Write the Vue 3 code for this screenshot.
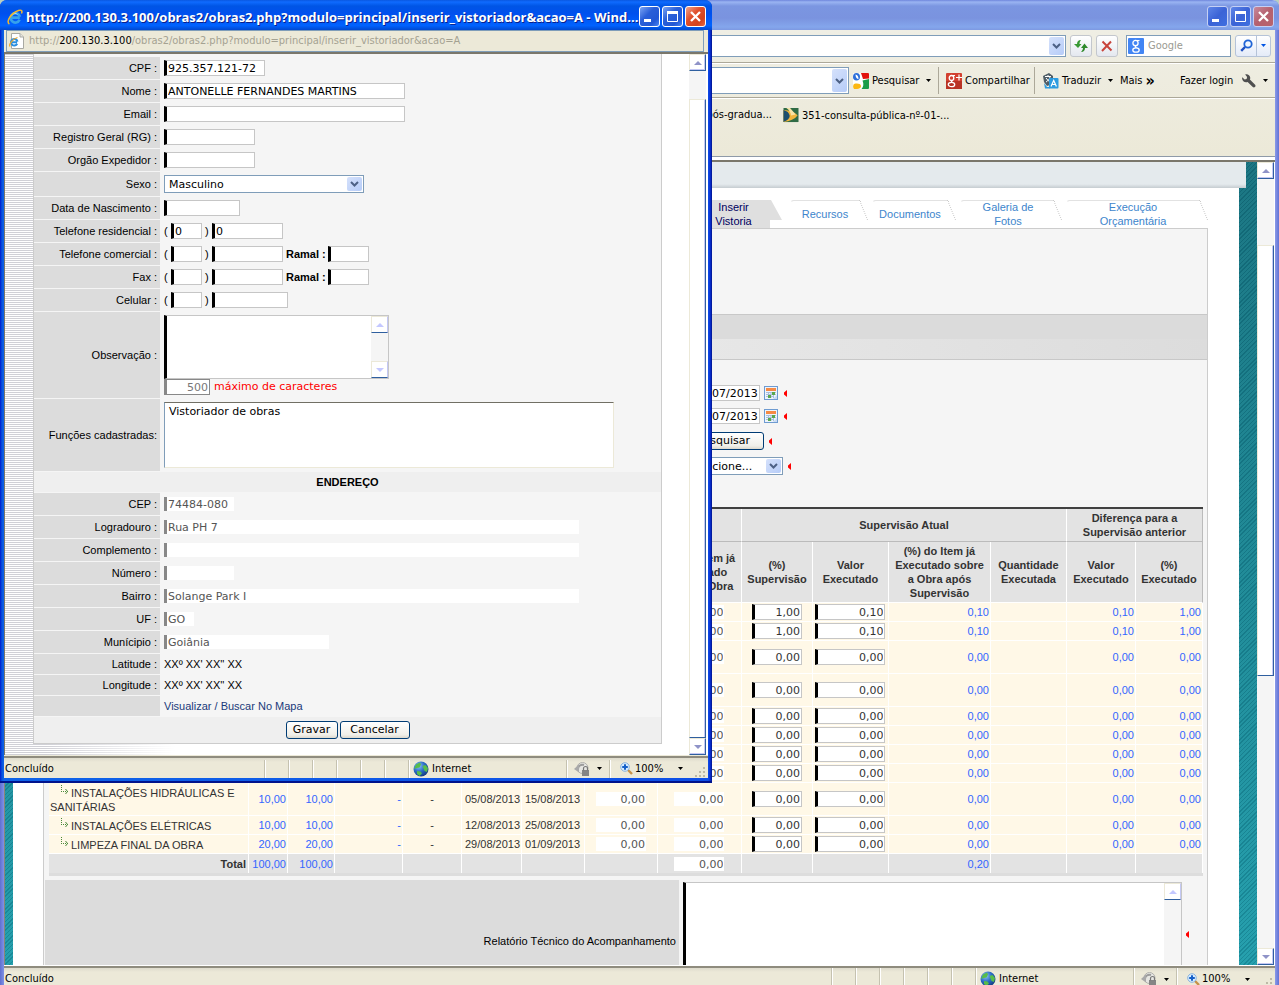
<script setup>
const paneCells = [1, 2, 3, 4, 5, 6]

const personal = [
  { id: 'cpf', label: 'CPF :', value: '925.357.121-72', size: 'w101' },
  { id: 'nome', label: 'Nome :', value: 'ANTONELLE FERNANDES MARTINS', size: 'w241' },
  { id: 'email', label: 'Email :', value: '', size: 'w241' },
  { id: 'rg', label: 'Registro Geral (RG) :', value: '', size: 'w91' },
  { id: 'orgao', label: 'Orgão Expedidor :', value: '', size: 'w91' },
]

const phones = [
  { id: 'telres', label: 'Telefone residencial :', ddd: '0', value: '0', size: 'w71', ramal: false },
  { id: 'telcom', label: 'Telefone comercial :', ddd: '', value: '', size: 'w71', ramal: true },
  { id: 'fax', label: 'Fax :', ddd: '', value: '', size: 'w71', ramal: true },
  { id: 'cel', label: 'Celular :', ddd: '', value: '', size: 'w76', ramal: false },
]

const address = [
  { id: 'cep', label: 'CEP :', value: '74484-080', size: 'w70' },
  { id: 'logradouro', label: 'Logradouro :', value: 'Rua PH 7', size: 'w415' },
  { id: 'complemento', label: 'Complemento :', value: '', size: 'w415' },
  { id: 'numero', label: 'Número :', value: '', size: 'w70' },
  { id: 'bairro', label: 'Bairro :', value: 'Solange Park I', size: 'w415' },
  { id: 'uf', label: 'UF :', value: 'GO', size: 'w30' },
  { id: 'municipio', label: 'Munícipio :', value: 'Goiânia', size: 'w165' },
]

const tabs = [
  { label: 'Recursos', size: 't82' },
  { label: 'Documentos', size: 't88' },
  { label: 'Galeria de Fotos', size: 't106' },
  { label: 'Execução Orçamentária', size: 't146' },
]

const cols = [200, 39, 47, 68, 59, 60, 63, 73, 84, 71, 76, 102, 76, 69, 67]
const total = cols.reduce((a, b) => a + b, 0)

const blank = { name: '', w: '', a: '', s: '', e: '' }
const items = [
  { ...blank, sup: '1,00', val: '0,10', diff: '1,00' },
  { ...blank, sup: '1,00', val: '0,10', diff: '1,00' },
  { ...blank, sup: '0,00', val: '0,00', diff: '0,00', tall: true },
  { ...blank, sup: '0,00', val: '0,00', diff: '0,00', tall: true },
  { ...blank, sup: '0,00', val: '0,00', diff: '0,00' },
  { ...blank, sup: '0,00', val: '0,00', diff: '0,00' },
  { ...blank, sup: '0,00', val: '0,00', diff: '0,00' },
  { ...blank, sup: '0,00', val: '0,00', diff: '0,00' },
  { name: 'INSTALAÇÕES HIDRÁULICAS E SANITÁRIAS', w: '10,00', a: '-', s: '05/08/2013', e: '15/08/2013', sup: '0,00', val: '0,00', diff: '0,00', tall: true },
  { name: 'INSTALAÇÕES ELÉTRICAS', w: '10,00', a: '-', s: '12/08/2013', e: '25/08/2013', sup: '0,00', val: '0,00', diff: '0,00' },
  { name: 'LIMPEZA FINAL DA OBRA', w: '20,00', a: '-', s: '29/08/2013', e: '01/09/2013', sup: '0,00', val: '0,00', diff: '0,00' },
]
</script>

<template>
  <svg class="defs" width="0" height="0" aria-hidden="true">
    <defs>
      <radialGradient id="globeFill" cx="35%" cy="30%" r="75%">
        <stop offset="0" stop-color="#8fc4f5" />
        <stop offset="0.5" stop-color="#2d6fc9" />
        <stop offset="1" stop-color="#123a80" />
      </radialGradient>
    </defs>
    <symbol id="i-ie" viewBox="0 0 16 16">
      <path d="M4 8.600h8.800M12.600 10.800A4.700 4.700 0 1 1 12.900 7.800" fill="none" stroke="#35a2ec" stroke-width="2.700" />
      <path d="M5.500 5.800a3.400 3.400 0 0 1 5-.4" fill="none" stroke="#a8defc" stroke-width="1" />
      <path d="M2.400 15C-1.500 13 4 4 11.500 1.500c3.500-1.200 4 .8 2.900 3" fill="none" stroke="#f2b92c" stroke-width="1.500" />
    </symbol>
    <symbol id="i-page" viewBox="0 0 16 16">
      <path d="M2.500.5h8.500l3.500 3.500v11.500h-12z" fill="#fff" stroke="#a9a9a2" />
      <path d="M11 .5V4h3.500" fill="#e6e6e0" stroke="#a9a9a2" />
      <path d="M2.500 9.300h5.600M8.200 10.800A3.300 3.300 0 1 1 8.500 8.600" fill="none" stroke="#2b8fe0" stroke-width="2" />
      <path d="M1 13.500c-1.500-2 3-8 7.500-9" fill="none" stroke="#f0a82a" stroke-width="1.200" />
    </symbol>
    <symbol id="i-min" viewBox="0 0 21 21"><path d="M5 13h7v3H5z" fill="#fff" /></symbol>
    <symbol id="i-max" viewBox="0 0 21 21">
      <path d="M5.500 6v9.500h10V6" fill="none" stroke="#fff" /><path d="M5 5h11v3H5z" fill="#fff" />
    </symbol>
    <symbol id="i-close" viewBox="0 0 21 21"><path d="M6 6l9 9M15 6l-9 9" stroke="#fff" stroke-width="2.300" /></symbol>
    <symbol id="i-chev" viewBox="0 0 9 6"><path d="M1 1l3.500 3.500L8 1" fill="none" stroke="#4d6185" stroke-width="2" /></symbol>
    <symbol id="i-down" viewBox="0 0 5 3"><path d="M0 0h5L2.500 3z" fill="currentColor" /></symbol>
    <symbol id="i-up" viewBox="0 0 8 4"><path d="M4 0l4 4H0z" fill="currentColor" /></symbol>
    <symbol id="i-dn" viewBox="0 0 8 4"><path d="M0 0h8L4 4z" fill="currentColor" /></symbol>
    <symbol id="i-refresh" viewBox="0 0 16 16">
      <path d="M8 2C5 2 4 4 4 6H1l4 4 3.500-4H6.500c0-1.500.5-2.500 1.500-4z" fill="#3a9a35" />
      <path d="M8 14c3 0 4-2 4-4h3l-3.500-4.500L8 10h2c0 1.500-.7 2.500-2 4z" fill="#2f8a2c" />
    </symbol>
    <symbol id="i-stop" viewBox="0 0 12 12">
      <path d="M1.500 1.500l9 9M10 1.500l-9 9.500" fill="none" stroke="#c8443c" stroke-width="2" />
    </symbol>
    <symbol id="i-g" viewBox="0 0 16 16">
      <rect width="16" height="16" rx="1" fill="#4285f4" />
      <ellipse cx="7.500" cy="5" rx="2.600" ry="2.700" fill="none" stroke="#fff" stroke-width="1.300" />
      <path d="M9 2.500h2.500M8 7.800c-1 .7-.8 1.400.5 2" fill="none" stroke="#fff" stroke-width="1.200" />
      <ellipse cx="8" cy="12" rx="3.200" ry="2.200" fill="none" stroke="#fff" stroke-width="1.300" />
    </symbol>
    <symbol id="i-search" viewBox="0 0 13 13">
      <circle cx="8" cy="5" r="3.700" fill="#eef5ff" stroke="#1e63d6" stroke-width="1.800" />
      <path d="M5 8l-3.800 3.800" stroke="#1e4fc0" stroke-width="2.400" />
    </symbol>
    <symbol id="i-google" viewBox="0 0 16 16">
      <rect width="16" height="16" rx="1" fill="#fff" />
      <path d="M8 0h7a1 1 0 0 1 1 1v4.500l-6 .5z" fill="#e2120c" />
      <path d="M9.500 7.500L16 6v9a1 1 0 0 1-1 1H8.500c2-2 2.500-5 1-8.500z" fill="#1a9c47" />
      <ellipse cx="3.500" cy="3.800" rx="3.500" ry="3.800" fill="#2d6fd9" />
      <path d="M2.500 1.500c2 .2 3 2 3 4.500-1.800 0-3-2-3-4.500z" fill="#fff" />
      <path d="M1 11c3-1 6.500-.5 7 1.800.3 1.800-1.500 3.200-4 3.200H1.200C-.2 15-.2 12 1 11z" fill="#fbb713" />
    </symbol>
    <symbol id="i-gplus" viewBox="0 0 16 16">
      <rect width="16" height="16" rx="1" fill="#d23f2f" />
      <path d="M0 8h16v8H0z" fill="#b93325" />
      <ellipse cx="5.500" cy="5" rx="2.300" ry="2.500" fill="none" stroke="#fff" stroke-width="1.300" />
      <path d="M6.500 2.500H9M6 7.500c-1 .8-.5 1.300.3 2M13 1.500v6M10 4.500h6" fill="none" stroke="#fff" stroke-width="1.200" />
      <ellipse cx="5.500" cy="11.500" rx="3.200" ry="2.200" fill="none" stroke="#fff" stroke-width="1.300" />
    </symbol>
    <symbol id="i-trans" viewBox="0 0 16 16">
      <path d="M0 3l6-3 4 3v8l-6 2-3-4z" fill="#4f5d66" />
      <path d="M2 3.500h6M5 2v2M3 9c2-1 3.500-3 4-5M3 5l3 3.500" stroke="#fff" fill="none" />
      <path d="M1 10l3 4h3v1.500H2z" fill="#2b9be0" />
      <rect x="6" y="5" width="9.500" height="10.500" rx="1" fill="#2b9be0" />
      <path d="M8 13.500l2.700-6 2.700 6M9 11.500h3.500" fill="none" stroke="#fff" stroke-width="1.200" />
    </symbol>
    <symbol id="i-wrench" viewBox="0 0 14 14">
      <path d="M3.200.4C5.500-.3 8 1 8.200 3.500c.1.800 0 1.500-.3 2.100l5.200 5.200c1.300 1.500-.8 3.600-2.300 2.300L5.600 7.900C3 8.900.3 7.200.1 4.500c0-.5 0-.9.200-1.300l2.300 2.200 2-.5.500-2z" fill="#4f4f4f" />
    </symbol>
    <symbol id="i-fav" viewBox="0 0 16 16">
      <path d="M0 0h16v15H0z" fill="#2f6b45" /><path d="M0 2c7 0 13 3 15 6-3 4-8 6-15 7z" fill="#f0b53c" />
      <path d="M0 2c4 1 6 3 6.500 6S4 13 0 15z" fill="#1d4f6e" /><path d="M3 0h4l6 7-5 1C8 5 6 2 3 0z" fill="#f7e3a5" />
    </symbol>
    <symbol id="i-globe" viewBox="0 0 16 16">
      <circle cx="8" cy="8" r="7.500" fill="url(#globeFill)" />
      <path d="M3 3.500l4-2 1 2-1.500 3-3 .5L1 8zM9.500 5l3-1 2.500 3-1 4-2.500-1-1-2.500zM4 10l3.500.5 1.500 2-2.500 2.500L4 13z" fill="#57bd4a" />
    </symbol>
    <symbol id="i-lock" viewBox="0 0 16 14">
      <circle cx="8.500" cy="6" r="5.500" fill="#e6e6e2" stroke="#b0b0ac" />
      <path d="M4 7c0-3 3-5 6-4" fill="none" stroke="#9c9c9c" stroke-width="2" />
      <path d="M0 7l5-4.500v8z" fill="#a9a9a9" />
      <path d="M8 14V8h7v6z" fill="#858585" /><path d="M9.500 8.500V6.500a2 2 0 0 1 4 0v2" fill="none" stroke="#777" stroke-width="1.200" />
    </symbol>
    <symbol id="i-zoom" viewBox="0 0 13 13">
      <path d="M8 8l4 4" stroke="#c79249" stroke-width="2.400" />
      <circle cx="5" cy="5" r="4.300" fill="#d7ecff" stroke="#8cb4dc" />
      <path d="M5 2.200v5.600M2.200 5h5.600" stroke="#1560c8" stroke-width="2" />
    </symbol>
    <symbol id="i-grip" viewBox="0 0 11 11">
      <path d="M8 0h2v2H8zM4 4h2v2H4zM8 4h2v2H8zM0 8h2v2H0zM4 8h2v2H4zM8 8h2v2H8z" fill="#bdb9a6" />
    </symbol>
    <symbol id="i-cal" viewBox="0 0 14 14">
      <rect x=".5" y=".5" width="13" height="13" fill="#eef4fc" stroke="#6e9bd1" />
      <path d="M2 2h10v3H2z" fill="#f58a45" />
      <path d="M2 6.500h10M2 8.500h10M2 10.500h8M4.500 6v6M7 6v6M9.500 6v6" stroke="#a9bfdc" />
      <path d="M8 6h3v3H8zM4 9h3v3H4z" fill="#5aa84c" />
      <path d="M13 9v4H9z" fill="#c9dcf3" />
    </symbol>
    <symbol id="i-req" viewBox="0 0 3 7"><path d="M3 0v7L0 4.500v-2z" fill="#f00" /></symbol>
    <symbol id="i-sub" viewBox="0 0 9 10">
      <path d="M1.500 0v7M1 6.500h7" fill="none" stroke="#4a8a3a" stroke-dasharray="1 1" />
      <path d="M5.500 4l2 2.500-2 2.500" fill="none" stroke="#4a8a3a" />
    </symbol>
  </svg>

  <div class="desktop">
    <main class="window back">
      <header class="titlebar dim">
        <span class="caption"></span>
        <button class="tb" aria-label="Minimizar"><svg><use href="#i-min" /></svg></button>
        <button class="tb" aria-label="Maximizar"><svg><use href="#i-max" /></svg></button>
        <button class="tb close" aria-label="Fechar"><svg><use href="#i-close" /></svg></button>
      </header>

      <div class="chrome">
        <div class="bar addressbar">
          <div class="box">
            <input class="plain" aria-label="Endereço" />
            <span class="drop"><svg width="9" height="6"><use href="#i-chev" /></svg></span>
          </div>
          <button class="nav" aria-label="Atualizar"><svg width="16" height="16"><use href="#i-refresh" /></svg></button>
          <button class="nav" aria-label="Parar"><svg width="12" height="12"><use href="#i-stop" /></svg></button>
          <div class="box search">
            <svg width="16" height="16"><use href="#i-g" /></svg>
            <input class="plain" placeholder="Google" aria-label="Pesquisar na web" />
          </div>
          <div class="split">
            <button aria-label="Pesquisar"><svg width="13" height="13"><use href="#i-search" /></svg></button>
            <button aria-label="Opções de pesquisa"><svg width="5" height="3"><use href="#i-down" /></svg></button>
          </div>
        </div>
        <div class="bar googlebar">
          <div class="box">
            <input class="plain" aria-label="Barra Google" />
            <span class="drop tall"><svg width="9" height="6"><use href="#i-chev" /></svg></span>
          </div>
          <div class="tools">
            <button class="tool g1"><svg width="16" height="16"><use href="#i-google" /></svg>Pesquisar<svg class="arr" width="5" height="3"><use href="#i-down" /></svg></button>
            <button class="tool g2"><svg width="16" height="16"><use href="#i-gplus" /></svg>Compartilhar</button>
            <button class="tool g3"><svg width="16" height="16"><use href="#i-trans" /></svg>Traduzir<svg class="arr" width="5" height="3"><use href="#i-down" /></svg></button>
            <button class="tool g4">Mais <b>»</b></button>
            <button class="tool g5">Fazer login</button>
            <button class="tool g6" aria-label="Configurações"><svg width="14" height="14"><use href="#i-wrench" /></svg><svg class="arr" width="5" height="3"><use href="#i-down" /></svg></button>
          </div>
        </div>
        <nav class="bar linkbar">
          <a href="#" class="fav first">pós-gradua...</a>
          <a href="#" class="fav"><svg width="16" height="15"><use href="#i-fav" /></svg>351-consulta-pública-nº-01-...</a>
        </nav>
      </div>

      <div class="viewport">
        <div class="teal">
          <div class="band"></div>
          <div class="page">
            <nav class="tabs">
              <a href="#" class="tab on">Inserir Vistoria</a>
              <a v-for="t in tabs" :key="t.label" href="#" class="tab" :class="t.size"><span>{{ t.label }}</span></a>
            </nav>
            <section class="panel">
              <div class="heading"><div class="shade"></div></div>
              <form class="dates" @submit.prevent>
                <div class="line">
                  <input class="field w76" value="23/07/2013" aria-label="Data inicial" />
                  <button class="cal" type="button" aria-label="Calendário"><svg width="14" height="14"><use href="#i-cal" /></svg></button>
                  <svg class="req" width="3" height="7"><use href="#i-req" /></svg>
                </div>
                <div class="line">
                  <input class="field w76" value="23/07/2013" aria-label="Data final" />
                  <button class="cal" type="button" aria-label="Calendário"><svg width="14" height="14"><use href="#i-cal" /></svg></button>
                  <svg class="req" width="3" height="7"><use href="#i-req" /></svg>
                </div>
                <div class="line">
                  <button class="xp w80" type="button">Pesquisar</button>
                  <svg class="req" width="3" height="7"><use href="#i-req" /></svg>
                </div>
                <div class="line">
                  <span class="combo w99">
                    <select aria-label="Situação"><option>Selecione...</option></select>
                    <span class="drop"><svg width="9" height="6"><use href="#i-chev" /></svg></span>
                  </span>
                  <svg class="req" width="3" height="7"><use href="#i-req" /></svg>
                </div>
              </form>

              <table class="grid">
                <colgroup>
                  <col v-for="(c, i) in cols" :key="i" :style="{ width: (c / total) * 100 + '%' }" />
                </colgroup>
                <thead>
                  <tr class="h1">
                    <th colspan="7"></th>
                    <th colspan="2">Última Supervisão</th>
                    <th colspan="4">Supervisão Atual</th>
                    <th colspan="2">Diferença para a Supervisão anterior</th>
                  </tr>
                  <tr class="h2">
                    <th colspan="8"></th>
                    <th>(%) do Item já Executado sobre a Obra</th>
                    <th>(%) Supervisão</th>
                    <th>Valor Executado</th>
                    <th>(%) do Item já Executado sobre a Obra após Supervisão</th>
                    <th>Quantidade Executada</th>
                    <th>Valor Executado</th>
                    <th>(%) Executado</th>
                  </tr>
                </thead>
                <tbody>
                  <tr v-for="(r, i) in items" :key="i" :class="{ tall: r.tall }">
                    <td class="name"><template v-if="r.name"><svg width="9" height="10"><use href="#i-sub" /></svg>{{ r.name }}</template></td>
                    <td class="num">{{ r.w }}</td>
                    <td class="num">{{ r.w }}</td>
                    <td class="num">{{ r.a }}</td>
                    <td class="mid">{{ r.a }}</td>
                    <td class="date">{{ r.s }}</td>
                    <td class="date">{{ r.e }}</td>
                    <td class="mid"><input class="ro w50" readonly value="0,00" aria-label="Supervisão anterior" /></td>
                    <td class="mid"><input class="ro w50" readonly value="0,00" aria-label="Executado sobre a obra" /></td>
                    <td class="mid"><input class="field w50" :value="r.sup" aria-label="(%) Supervisão" /></td>
                    <td class="mid"><input class="field w70" :value="r.val" aria-label="Valor Executado" /></td>
                    <td class="num">{{ r.val }}</td>
                    <td></td>
                    <td class="num">{{ r.val }}</td>
                    <td class="num">{{ r.diff }}</td>
                  </tr>
                </tbody>
                <tfoot>
                  <tr>
                    <th>Total</th>
                    <td class="num">100,00</td>
                    <td class="num">100,00</td>
                    <td></td><td></td><td></td><td></td><td></td>
                    <td class="mid"><input class="ro w50" readonly value="0,00" aria-label="Total executado" /></td>
                    <td></td><td></td>
                    <td class="num">0,20</td>
                    <td></td><td></td><td></td>
                  </tr>
                </tfoot>
              </table>

              <div class="report">
                <label for="relatorio">Relatório Técnico do Acompanhamento</label>
                <div class="reportfield">
                  <div class="area">
                    <textarea id="relatorio"></textarea>
                    <div class="scroll off">
                      <span class="sb"><svg width="8" height="4"><use href="#i-up" /></svg></span>
                      <span class="track"></span>
                      <span class="sb"><svg width="8" height="4"><use href="#i-dn" /></svg></span>
                    </div>
                  </div>
                  <svg class="req" width="3" height="7"><use href="#i-req" /></svg>
                </div>
              </div>
            </section>
          </div>
        </div>
        <div class="scroll">
          <span class="sb"><svg width="8" height="4"><use href="#i-up" /></svg></span>
          <span class="track gap66"></span>
          <span class="thumb"></span>
          <span class="track gap273"></span>
          <span class="sb"><svg width="8" height="4"><use href="#i-dn" /></svg></span>
        </div>
      </div>

      <footer class="status">
        <span class="msg">Concluído</span>
        <span v-for="n in paneCells" :key="n" class="pane"></span>
        <span class="pane zone"><svg width="16" height="16"><use href="#i-globe" /></svg>Internet</span>
        <span class="pane lock"><svg width="16" height="14"><use href="#i-lock" /></svg><svg width="5" height="3"><use href="#i-down" /></svg></span>
        <span class="pane zoom"><svg width="13" height="13"><use href="#i-zoom" /></svg>100%<svg class="arr" width="5" height="3"><use href="#i-down" /></svg></span>
        <svg class="grip" width="11" height="11"><use href="#i-grip" /></svg>
      </footer>
    </main>

    <section class="window front">
      <header class="titlebar">
        <svg class="logo" width="16" height="16"><use href="#i-ie" /></svg>
        <h1 class="caption">http://200.130.3.100/obras2/obras2.php?modulo=principal/inserir_vistoriador&amp;acao=A - Wind...</h1>
        <button class="tb" aria-label="Minimizar"><svg><use href="#i-min" /></svg></button>
        <button class="tb" aria-label="Maximizar"><svg><use href="#i-max" /></svg></button>
        <button class="tb close" aria-label="Fechar"><svg><use href="#i-close" /></svg></button>
      </header>
      <div class="location">
        <svg width="16" height="16"><use href="#i-page" /></svg>
        <p>http://<b>200.130.3.100</b>/obras2/obras2.php?modulo=principal/inserir_vistoriador&amp;acao=A</p>
      </div>

      <div class="viewport">
        <div class="hatch">
          <form class="sheet" @submit.prevent>
            <div v-for="f in personal" :key="f.id" class="row">
              <label :for="f.id">{{ f.label }}</label>
              <div class="val"><input :id="f.id" class="field" :class="f.size" :value="f.value" /></div>
            </div>
            <div class="row">
              <label for="sexo">Sexo :</label>
              <div class="val sel">
                <span class="combo w200">
                  <select id="sexo"><option>Masculino</option><option>Feminino</option></select>
                  <span class="drop"><svg width="9" height="6"><use href="#i-chev" /></svg></span>
                </span>
              </div>
            </div>
            <div class="row">
              <label for="nasc">Data de Nascimento :</label>
              <div class="val"><input id="nasc" class="field w76" /></div>
            </div>
            <div v-for="p in phones" :key="p.id" class="row">
              <label :for="p.id">{{ p.label }}</label>
              <div class="val phone">
                <span class="open">(</span>
                <input class="field w31" :value="p.ddd" :aria-label="'DDD ' + p.label" />
                <span class="shut">)</span>
                <input :id="p.id" class="field" :class="p.size" :value="p.value" />
                <template v-if="p.ramal">
                  <label class="ramal" :for="p.id + 'r'">Ramal :</label>
                  <input :id="p.id + 'r'" class="field w41" />
                </template>
              </div>
            </div>
            <div class="row">
              <label for="obs">Observação :</label>
              <div class="val obs">
                <div class="area">
                  <textarea id="obs"></textarea>
                  <div class="scroll off">
                    <span class="sb"><svg width="8" height="4"><use href="#i-up" /></svg></span>
                    <span class="track"></span>
                    <span class="sb"><svg width="8" height="4"><use href="#i-dn" /></svg></span>
                  </div>
                </div>
                <div class="counter">
                  <input id="restam" class="field w46" value="500" readonly />
                  <label for="restam">máximo de caracteres</label>
                </div>
              </div>
            </div>
            <div class="row">
              <label for="funcoes">Funções cadastradas:</label>
              <div class="val funcs">
                <select id="funcoes" size="4"><option>Vistoriador de obras</option></select>
              </div>
            </div>
            <h2>ENDEREÇO</h2>
            <div v-for="f in address" :key="f.id" class="row">
              <label :for="f.id">{{ f.label }}</label>
              <div class="val"><input :id="f.id" class="ro bar3" :class="f.size" :value="f.value" readonly /></div>
            </div>
            <div class="row short">
              <span class="lab">Latitude :</span>
              <div class="val">XXº XX' XX'' XX</div>
            </div>
            <div class="row short">
              <span class="lab">Longitude :</span>
              <div class="val">XXº XX' XX'' XX</div>
            </div>
            <div class="row short">
              <span class="lab"></span>
              <div class="val"><a href="#">Visualizar / Buscar No Mapa</a></div>
            </div>
            <div class="actions">
              <button class="xp w52">Gravar</button>
              <button class="xp w70b" type="button">Cancelar</button>
            </div>
          </form>
        </div>
        <div class="scroll">
          <span class="sb"><svg width="8" height="4"><use href="#i-up" /></svg></span>
          <span class="track gap28"></span>
          <span class="thumb"></span>
          <span class="sb"><svg width="8" height="4"><use href="#i-dn" /></svg></span>
        </div>
      </div>

      <footer class="status">
        <span class="msg">Concluído</span>
        <span v-for="n in paneCells" :key="n" class="pane"></span>
        <span class="pane zone"><svg width="16" height="16"><use href="#i-globe" /></svg>Internet</span>
        <span class="pane lock"><svg width="16" height="14"><use href="#i-lock" /></svg><svg width="5" height="3"><use href="#i-down" /></svg></span>
        <span class="pane zoom"><svg width="13" height="13"><use href="#i-zoom" /></svg>100%<svg class="arr" width="5" height="3"><use href="#i-down" /></svg></span>
        <svg class="grip" width="11" height="11"><use href="#i-grip" /></svg>
      </footer>
    </section>
  </div>
</template>

<style>
html, body { margin: 0; background: #b9cfc0; }
</style>

<style scoped>
*, *::before, *::after { box-sizing: border-box; }
.defs { position: absolute; }
.desktop {
  position: relative; height: 100vh; min-height: 784px; overflow: hidden;
  font: 11px/14px "Liberation Sans", Arial, sans-serif; color: #000;
}
button, input, select, textarea { font: inherit; color: inherit; margin: 0; padding: 0; border: 0; border-radius: 0; background: none; outline: 0; appearance: none; }
svg { display: block; flex: none; }
a { text-decoration: none; }
h1, h2, p { margin: 0; }

.window { display: flex; flex-direction: column; }
.back { height: 100%; padding: 0 4px; background: linear-gradient(90deg, #5f6fd0, #7f92e6 4px, #fff 4px, #fff calc(100% - 4px), #8a9ae8 calc(100% - 4px), #6272d4); border-radius: 7px 7px 0 0; overflow: hidden; }
.front {
  position: absolute; left: 0; top: 0; width: min(712px, 100%);
  padding: 0 4px 5px; border-radius: 7px 7px 0 0; overflow: hidden;
  background: linear-gradient(90deg, #0019cf, #0855dd 2px, #0e63e8 4px, #0e4fe6 calc(100% - 4px), #0831d9 calc(100% - 2px), #00138c);
  box-shadow: inset 0 -2px #00138c;
}
.titlebar {
  display: flex; align-items: center; gap: 2px; height: 30px; margin: 0 -4px; padding: 3px 6px 0 7px;
  background: linear-gradient(#0a58e0, #0f6bff 2px, #0055e5 6px, #0050ee 45%, #0062ff 85%, #0048d0);
}
.titlebar.dim { padding-right: 5px; background: linear-gradient(#6f86dc, #9ab4f2 2px, #7b96e1 6px, #7a93df 60%, #84a6ec 90%, #7d99e2); }
.caption { flex: 1; min-width: 0; white-space: nowrap; font: bold 13px/18px "Open Sans", sans-serif; color: #fff; text-shadow: 1px 1px #0a1f8c; }
.logo { margin-right: 1px; }
.tb { flex: none; width: 21px; height: 21px; border: 1px solid #fff; border-radius: 3px; background: linear-gradient(135deg, #7ba4f4, #2a5fd8 40%, #2257d5 75%, #4b85f4); }
.tb svg { width: 21px; height: 21px; margin: -1px; }
.tb.close { background: linear-gradient(135deg, #f0a58c, #e0502d 40%, #d4431d 75%, #e66a45); }
.dim .tb { border-color: #c5d0f4; background: linear-gradient(135deg, #5f86e8, #3b63d6 50%, #3f6fe0); }
.dim .tb.close { background: linear-gradient(135deg, #c78a9c, #b5606e 50%, #b8646c); }

.chrome { background: linear-gradient(#efeee4, #ece9d8); font: 11px/14px "DejaVu Sans Condensed", "DejaVu Sans", sans-serif; border-bottom: 1px solid #8f9aa8; }
.bar { display: flex; align-items: center; }
.box { display: flex; align-items: center; flex: 1; min-width: 0; border: 1px solid #7f9db9; background: #fff; padding: 0 1px; }
.plain { flex: 1; min-width: 0; }
.drop { display: flex; align-items: center; justify-content: center; width: 15px; height: 18px; border-radius: 2px; background: linear-gradient(135deg, #d5e1fb, #b6ccf8); }
.addressbar { height: 33px; gap: 4px; padding: 0 4px 1px 6px; border-bottom: 1px solid #aca899; }
.addressbar .box { height: 22px; }
.nav { display: grid; place-items: center; width: 22px; height: 22px; border: 1px solid #c3c7cd; border-radius: 3px; background: linear-gradient(#fff, #e4e8ef); }
.addressbar .search { flex: 0 0 105px; margin-left: 4px; gap: 4px; }
.search .plain::placeholder { color: #9a9a92; opacity: 1; }
.split { display: flex; height: 22px; border: 1px solid #b5c3d8; border-radius: 3px; background: linear-gradient(#fff, #e4ebf8); color: #0055e5; }
.split button { display: grid; place-items: center; width: 20px; }
.split button + button { width: 14px; border-left: 1px solid #b5c3d8; }
.googlebar { height: 35px; padding: 0 0 0 6px; border-top: 1px solid #fff; border-bottom: 1px solid #aca899; }
.googlebar .box { height: 27px; }
.drop.tall { height: 23px; }
.tools { display: flex; align-items: center; flex: 0 0 426px; height: 31px; padding-left: 4px; }
.tool { display: flex; align-items: center; gap: 3px; height: 27px; white-space: nowrap; }
.tool .arr { margin-left: 4px; }
.g1 { width: 86px; border-right: 1px solid #aca899; }
.g2 { width: 96px; padding-left: 7px; border-right: 1px solid #aca899; }
.g3 { width: 85px; padding-left: 8px; }
.g4 { width: 60px; }
.g4 b { font-size: 16px; }
.g5 { width: 62px; }
.linkbar { align-items: flex-start; height: 58px; padding-top: 9px; border-top: 1px solid #fff; }
.fav { display: flex; align-items: center; gap: 3px; color: #000; white-space: nowrap; }
.fav.first { justify-content: flex-end; width: 779px; padding-right: 11px; }

.viewport { display: flex; }
.back .viewport { flex: 1; min-height: 0; overflow: hidden; margin-top: 3px; border-top: 2px solid #7a776b; border-left: 1px solid #8a8678; background: #fff; }
.teal {
  flex: 1; min-width: 0; display: flex; flex-direction: column; padding: 0 18px 0 8px; overflow: hidden;
  background: repeating-linear-gradient(135deg, rgba(0, 40, 60, .16) 0 1px, rgba(255, 255, 255, .03) 1px 3px), linear-gradient(#15727f, #1f9dab);
}
.band { flex: none; height: 26px; margin-right: -7px; background: linear-gradient(#e4eaed 85%, #c5ccd0); }
.page { flex: 1; background: #fff; padding: 12px 31px 0 30px; }
.tabs { display: flex; justify-content: flex-end; height: 28px; text-align: center; }
.tab { display: flex; align-items: center; justify-content: center; position: relative; color: #3d85cc; }
.tab.on { width: 111px; padding: 0 20px 0 26px; color: #000060; background: #dfdfdf; clip-path: polygon(0 0, 96px 0, 107px 20px, 95px 20px, 95px 100%, 0 100%); }
.tab:not(.on)::before, .tab:not(.on)::after { content: ""; position: absolute; top: 0; height: 20px; }
.tab:not(.on)::before { left: 4px; right: 8px; border-top: 1px solid #e2e2e2; border-left: 1px solid #e6e6e6; border-radius: 4px 0 0; }
.tab:not(.on)::before { height: 10px; border-left-color: transparent; }
.tab:not(.on)::after { right: 4px; width: 1px; border-right: 1px dotted #ccc; transform: skewX(22deg); }
.t82 { width: 82px; } .t88 { width: 88px; } .t106 { width: 106px; } .t146 { width: 146px; }
.t82 span, .t88 span { padding-right: 4px; }
.t106 span { padding: 0 24px 0 22px; }
.t146 span { padding: 0 34px 0 30px; }
.panel { min-height: 100%; padding-top: 85px; border: 1px solid #ccc; background: #f5f5f5; }
.heading { height: 46px; border: solid #c8c8c8; border-width: 1px 0; background: #dbdbdb; padding-top: 24px; }
.shade { height: 20px; background: linear-gradient(90deg, #f5f5f5, #dcdcdc); }
.dates { padding: 25px 0 32px 55%; }
.line { display: flex; align-items: center; height: 16px; margin-bottom: 7px; }
.line:nth-child(3) { height: 18px; margin: 8px 0 7px; }
.line:last-child { height: 18px; margin: 0; }
.line .req { margin-left: 5px; }
.line .field { text-align: right; }
.cal { margin: 0 1px 0 4px; }

.field { height: 16px; border: 1px solid #c6c6c6; border-left: 3px solid #000; background: #fff; padding: 0 1px; font: 11px/14px "DejaVu Sans", Verdana, sans-serif; }
.ro { height: 14px; border: 0; background: #fff; color: #555; padding: 1px 1px 0; font: 11px/13px "DejaVu Sans", Verdana, sans-serif; }
.ro.bar3 { border-left: 3px solid #888; }
.xp { height: 18px; border: 1px solid #003c74; border-radius: 3px; background: linear-gradient(#fff, #f0efe9 80%, #dcd8cd); font: 11px/14px "DejaVu Sans", Verdana, sans-serif; }
.combo { display: grid; height: 18px; border: 1px solid #7f9db9; background: #fff; font: 11px/14px "DejaVu Sans", Verdana, sans-serif; }
.combo select, .combo .drop { grid-area: 1 / 1; }
.combo select { padding: 2px 4px 0; }
.combo .drop { justify-self: end; align-self: center; height: 14px; margin-right: 1px; pointer-events: none; }
.w30 { width: 30px; } .w31 { width: 31px; } .w41 { width: 41px; } .w46 { width: 46px; } .w50 { width: 50px; }
.w52 { width: 52px; } .w70, .w70b { width: 70px; } .w71 { width: 71px; } .w76 { width: 76px; } .w80 { width: 80px; }
.w91 { width: 91px; } .w99 { width: 99px; } .w101 { width: 101px; } .w165 { width: 165px; } .w200 { width: 200px; }
.w241 { width: 241px; } .w415 { width: 415px; }

.grid { width: calc(100% - 9px); margin: 0 4px 0 5px; table-layout: fixed; border-collapse: separate; border-spacing: 0; border-top: 2px solid #404040; border-bottom: 3px solid #ddd; color: #333; }
.grid th, .grid td { padding: 0 2px; border: solid #fff; border-width: 0 1px 1px 0; height: 19px; }
.grid th { background: #e3e3e3; }
.grid thead th { padding: 0; }
.grid thead th:last-child { border-right-color: #bbb; }
.grid .h1 th { height: 33px; border-bottom-color: #bbb; }
.grid .h2 th { height: 61px; padding: 0 3px; }
.grid td { background: #fff8e7; }
.grid .tall td { height: 33px; }
.grid .num { text-align: right; color: #3366ff; padding-right: 1px; }
.grid .mid { text-align: center; padding: 0; }
.grid .date { text-align: left; padding: 0 0 0 3px; }
.grid .name { padding: 0 1px; }
.name svg { display: inline-block; margin: 0 2px 0 10px; vertical-align: 2px; }
.grid input { display: block; margin: 0 auto; text-align: right; }
.grid tfoot td, .grid tfoot th { background: #e3e3e3; border-bottom: 0; }
.grid tfoot th { text-align: right; }

.report { display: grid; grid-template-columns: 638px 1fr; padding: 4px 0 0 1px; }
.report > label { display: flex; align-items: center; justify-content: flex-end; height: 122px; margin-right: 4px; padding-right: 3px; background: #dcdcdc; }
.reportfield { display: flex; align-items: center; gap: 4px; padding: 2px 18px 15px 0; }
.area { display: flex; flex: 1; height: 100%; border: 1px solid #c6c6c6; border-left: 3px solid #000; background: #fff; }
.area textarea { flex: 1; min-width: 0; resize: none; font: 11px/14px "DejaVu Sans", sans-serif; }

.scroll { display: flex; flex-direction: column; width: 17px; background: #f5f5f5; color: #8f93c8; }
.sb { display: grid; place-items: center; flex: none; height: 17px; border: 1px solid #ece9d8; border-right: 1px solid #2f5f9f; border-bottom: 1px solid #2f5f9f; background: #fff; box-shadow: inset -1px -1px #c4c8f4; }
.track { flex: 1; }
.thumb { flex: 638; border: 1px solid #ece9d8; border-right-color: #2f5f9f; border-bottom-color: #2f5f9f; background: #fff; box-shadow: inset -1px 0 #c4c8f4; }
.gap28 { flex: 28; } .gap66 { flex: 66; } .gap273 { flex: 273; }
.back .thumb { flex-grow: 431; }
.back .viewport > .scroll { margin-right: 1px; }
.scroll.off { color: #c4c8ff; }
.scroll.off .sb { border-right-color: #c4c8f4; box-shadow: none; }

.status { display: flex; align-items: center; height: 22px; padding: 1px 2px 0 0; border-top: 2px solid #8f8c7e; background: linear-gradient(#dedbcc, #ece9d8 4px, #ece9d8); font: 11px/14px "DejaVu Sans Condensed", "DejaVu Sans", sans-serif; white-space: nowrap; }
.msg { flex: 1; padding-left: 1px; }
.pane { display: flex; align-items: center; flex: 0 0 24px; height: 18px; border-left: 1px solid #c5c2b0; box-shadow: inset 1px 0 #fff; }
.zone { flex-basis: 158px; gap: 3px; padding-left: 4px; }
.lock { flex-basis: 43px; gap: 7px; padding-left: 7px; }
.zoom { flex-basis: 86px; gap: 2px; padding-left: 10px; }
.zoom .arr { margin-left: 13px; }
.grip { align-self: flex-end; }
.back .status { flex: none; height: 19px; padding-top: 0; align-items: flex-start; margin-top: 1px; overflow: hidden; line-height: 12px; }
.back .status .msg { padding-top: 5px; }
.back .status .pane { height: 22px; }
.back .status .grip { margin-bottom: -4px; }

.location { display: flex; align-items: center; gap: 4px; height: 22px; margin-right: 4px; padding-left: 2px; margin-left: 2px; border: 1px solid #7f9db9; background: #ece9d8; font: 11px/14px "DejaVu Sans Condensed", "DejaVu Sans", sans-serif; color: #a5a292; box-shadow: 4px 0 #ece9d8, -2px 0 #ece9d8; }
.location b { font-weight: normal; color: #000; }
.front .viewport { border-top: 2px solid #7a776b; border-left: 1px solid #7a776b; background: #fff; padding-right: 2px; margin-bottom: 1px; box-shadow: 0 2px #ece9d8; }
.hatch {
  flex: 1; min-width: 0; padding: 0 27px 11px 28px;
  background: linear-gradient(90deg, rgba(255, 255, 255, 0) 40px, #fff 170px), repeating-linear-gradient(#d0d0d6 0 1px, #fff 1px 2px);
}
.sheet { display: flex; flex-direction: column; gap: 1px; padding-top: 3px; background: #f5f5f5; border: 1px solid #ccc; border-top: 0; }
.row { display: grid; grid-template-columns: 126px 1fr; min-height: 22px; }
.row > label, .lab { display: flex; align-items: center; justify-content: flex-end; padding-right: 3px; background: #dcdcdc; }
.val { display: flex; align-items: center; padding-left: 4px; }
.sel { padding-top: 3px; padding-bottom: 3px; }
.row:has(.sel) { min-height: 24px; }
.short { min-height: 20px; }
.short a { color: #1a3a7a; }
.phone .open { width: 7px; } .phone .shut { width: 10px; padding-left: 3px; }
.ramal { width: 45px; padding-left: 3px; font-weight: bold; }
.val.obs { display: block; padding-top: 3px; padding-bottom: 3px; }
.obs .area { width: 225px; height: 64px; }
.counter { display: flex; align-items: center; gap: 4px; font: 11px/16px "DejaVu Sans", Verdana, sans-serif; color: #f00; }
.counter input { border-color: #888; color: #777; text-align: right; }
.val.funcs { padding: 3px 47px 3px 4px; }
.funcs select { flex: 1; height: 66px; border: 1px solid; border-color: #716f64 #ece9d8 #ece9d8 #7f9db9; background: #fff; overflow: hidden; font: 11px/14px "DejaVu Sans", Verdana, sans-serif; }
.funcs option { padding: 2px 4px; min-height: 0; line-height: 14px; }
h2 { height: 20px; background: #efefef; text-align: center; font: bold 11px/20px "Liberation Sans", sans-serif; }
.actions { display: flex; align-items: center; justify-content: center; gap: 2px; height: 26px; background: #efefef; }
</style>
